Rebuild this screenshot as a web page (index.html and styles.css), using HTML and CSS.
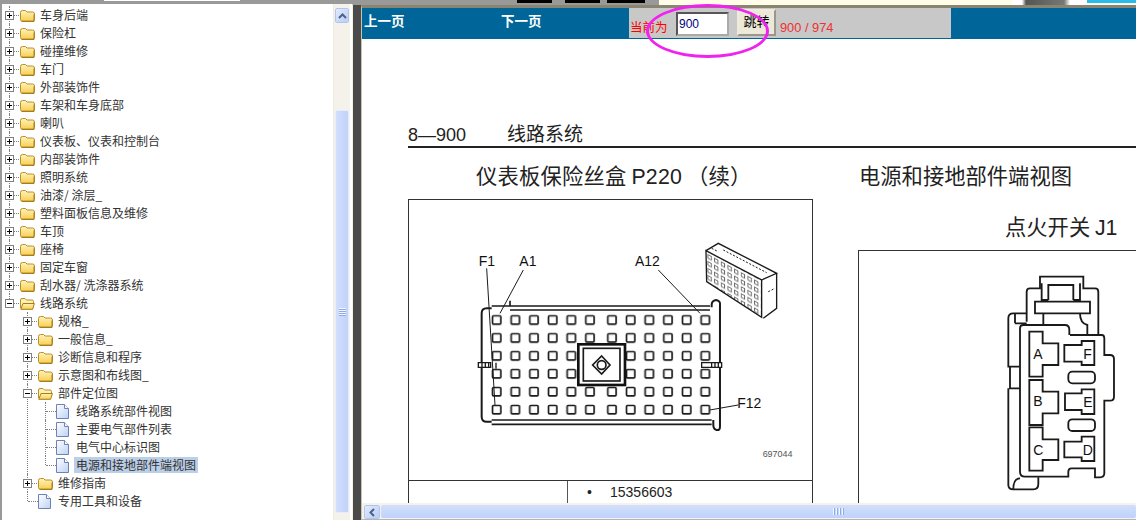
FILE: index.html
```html
<!DOCTYPE html>
<html lang="zh-CN">
<head>
    <meta charset="UTF-8">
    <title>线路系统</title>
    <link rel="stylesheet" href="styles.css">
</head>
<body>
    <svg class="defs" width="0" height="0">
        <defs>
            <linearGradient id="gFolder" x1="0" y1="0" x2="0" y2="1">
                <stop offset="0" stop-color="#fff3b8"/>
                <stop offset="1" stop-color="#f8cf55"/>
            </linearGradient>
            <linearGradient id="gDoc" x1="0" y1="0" x2="1" y2="1">
                <stop offset="0" stop-color="#ffffff"/>
                <stop offset="1" stop-color="#bcd2f4"/>
            </linearGradient>
            <symbol id="folder" viewBox="0 0 15 13">
                <path d="M.5 3.500q0-2 2-2h3l1.500 1.500h5.500q2 0 2 2v5.500q0 1.500-1.500 1.500h-11q-1.500 0-1.500-1.500z" fill="url(#gFolder)" stroke="#b88f2a"/>
                <path d="M1.500 12.500h12.500v-7" fill="none" stroke="#a87c18"/>
            </symbol>
            <symbol id="folderOpen" viewBox="0 0 15 13">
                <path d="M.5 11V3q0-1.500 1.500-1.500h3L6.500 3H12q1.500 0 1.500 1.500V6" fill="#fdf0b0" stroke="#b88f2a"/>
                <path d="M.8 12.300 3 6.500h11.400l-1.800 5.800z" fill="url(#gFolder)" stroke="#a87c18"/>
            </symbol>
            <symbol id="page" viewBox="0 0 13 15">
                <path d="M.5.5h8l4 4v10H.5z" fill="url(#gDoc)" stroke="#6f82b8"/>
                <path d="M8.500.5v4h4" fill="#fff" stroke="#6f82b8"/>
            </symbol>
        </defs>
    </svg>

    <div class="topstrip">
        <span class="strip-white"></span>
        <span class="strip-black"></span>
        <span class="strip-black"></span>
        <span class="strip-black last"></span>
        <span class="strip-cream"></span>
        <span class="strip-logo"></span>
        <span class="strip-cyan"></span>
    </div>

    <div class="main">
        <!-- tree on the left -->
        <div class="treepane">
            <ul class="tree">
                <li><div class="row"><i class="tg plus"></i><svg class="ic"><use href="#folder"/></svg><span>车身后端</span></div></li>
                <li><div class="row"><i class="tg plus"></i><svg class="ic"><use href="#folder"/></svg><span>保险杠</span></div></li>
                <li><div class="row"><i class="tg plus"></i><svg class="ic"><use href="#folder"/></svg><span>碰撞维修</span></div></li>
                <li><div class="row"><i class="tg plus"></i><svg class="ic"><use href="#folder"/></svg><span>车门</span></div></li>
                <li><div class="row"><i class="tg plus"></i><svg class="ic"><use href="#folder"/></svg><span>外部装饰件</span></div></li>
                <li><div class="row"><i class="tg plus"></i><svg class="ic"><use href="#folder"/></svg><span>车架和车身底部</span></div></li>
                <li><div class="row"><i class="tg plus"></i><svg class="ic"><use href="#folder"/></svg><span>喇叭</span></div></li>
                <li><div class="row"><i class="tg plus"></i><svg class="ic"><use href="#folder"/></svg><span>仪表板、仪表和控制台</span></div></li>
                <li><div class="row"><i class="tg plus"></i><svg class="ic"><use href="#folder"/></svg><span>内部装饰件</span></div></li>
                <li><div class="row"><i class="tg plus"></i><svg class="ic"><use href="#folder"/></svg><span>照明系统</span></div></li>
                <li><div class="row"><i class="tg plus"></i><svg class="ic"><use href="#folder"/></svg><span>油漆/ 涂层_</span></div></li>
                <li><div class="row"><i class="tg plus"></i><svg class="ic"><use href="#folder"/></svg><span>塑料面板信息及维修</span></div></li>
                <li><div class="row"><i class="tg plus"></i><svg class="ic"><use href="#folder"/></svg><span>车顶</span></div></li>
                <li><div class="row"><i class="tg plus"></i><svg class="ic"><use href="#folder"/></svg><span>座椅</span></div></li>
                <li><div class="row"><i class="tg plus"></i><svg class="ic"><use href="#folder"/></svg><span>固定车窗</span></div></li>
                <li><div class="row"><i class="tg plus"></i><svg class="ic"><use href="#folder"/></svg><span>刮水器/ 洗涤器系统</span></div></li>
                <li class="last">
                    <div class="row"><i class="tg minus"></i><svg class="ic"><use href="#folderOpen"/></svg><span>线路系统</span></div>
                    <ul>
                        <li><div class="row"><i class="tg plus"></i><svg class="ic"><use href="#folder"/></svg><span>规格_</span></div></li>
                        <li><div class="row"><i class="tg plus"></i><svg class="ic"><use href="#folder"/></svg><span>一般信息_</span></div></li>
                        <li><div class="row"><i class="tg plus"></i><svg class="ic"><use href="#folder"/></svg><span>诊断信息和程序</span></div></li>
                        <li><div class="row"><i class="tg plus"></i><svg class="ic"><use href="#folder"/></svg><span>示意图和布线图_</span></div></li>
                        <li>
                            <div class="row"><i class="tg minus"></i><svg class="ic"><use href="#folderOpen"/></svg><span>部件定位图</span></div>
                            <ul>
                                <li><div class="row leaf"><svg class="ic ic-page"><use href="#page"/></svg><span>线路系统部件视图</span></div></li>
                                <li><div class="row leaf"><svg class="ic ic-page"><use href="#page"/></svg><span>主要电气部件列表</span></div></li>
                                <li><div class="row leaf"><svg class="ic ic-page"><use href="#page"/></svg><span>电气中心标识图</span></div></li>
                                <li class="last"><div class="row leaf"><svg class="ic ic-page"><use href="#page"/></svg><span class="selected">电源和接地部件端视图</span></div></li>
                            </ul>
                        </li>
                        <li><div class="row"><i class="tg plus"></i><svg class="ic"><use href="#folder"/></svg><span>维修指南</span></div></li>
                        <li class="last"><div class="row leaf"><svg class="ic ic-page"><use href="#page"/></svg><span>专用工具和设备</span></div></li>
                    </ul>
                </li>
            </ul>
            <div class="vscroll">
                <div class="sbtn up"><svg width="9" height="6" viewBox="0 0 9 6"><path d="M1 5l3.500-3.500L8 5" fill="none" stroke="#4d6185" stroke-width="2"/></svg></div>
                <div class="vthumb"><i></i><i></i><i></i><i></i></div>
            </div>
        </div>

        <div class="splitter"></div>

        <!-- document on the right -->
        <div class="viewer">
            <div class="pagebar">
                <a class="pagelink">上一页</a>
                <a class="pagelink">下一页</a>
                <div class="jump">
                    <span class="jump-label">当前为</span>
                    <input class="jump-input" type="text" value="900">
                    <button class="jump-btn">跳转</button>
                    <span class="jump-count">900 / 974</span>
                </div>
                <div class="circle"></div>
            </div>

            <div class="doc">
                <div class="doc-head"><span class="doc-num">8—900</span><span>线路系统</span></div>
                <div class="doc-cols">
                    <div class="col-left">
                        <h2 class="doc-title center">仪表板保险丝盒 <span class="latin">P220</span> （续）</h2>
                        <div class="figbox">
                            <svg class="fig" width="403" height="280" viewBox="409 200 403 280">
                                <defs>
                                    <pattern id="holes" patternUnits="userSpaceOnUse" x="90" y="250" width="56" height="53.800">
                                        <rect x="7.500" y="7.500" width="25" height="25" rx="3" fill="#fff" stroke="#1a1a1a" stroke-width="5"/>
                                    </pattern>
                                    <pattern id="holesRight" href="#holes" x="436"/>
                                    <pattern id="miniholes" patternUnits="userSpaceOnUse" width="20" height="21" patternTransform="skewY(28.600)">
                                        <rect x="4" y="4" width="10" height="11" fill="#fff" stroke="#555" stroke-width="2.500"/>
                                    </pattern>
                                </defs>
                                <g transform="translate(460 230) scale(.3333)" fill="none" stroke="#1a1a1a" stroke-width="5">
                                    <rect x="90" y="250" width="336" height="323" fill="url(#holes)" stroke="none"/>
                                    <rect x="436" y="250" width="336" height="323" fill="url(#holesRight)" stroke="none"/>
                                    <path d="M95 228H150V212M150 228H750M150 240H750"/>
                                    <path d="M95 235H80Q65 235 65 250V560Q65 575 80 575H95" stroke-width="6"/>
                                    <path d="M95 570H755M95 583H755" stroke-width="5"/>
                                    <path d="M755 232V225Q755 212 768 210Q782 212 780 225V590Q780 602 770 600Q760 598 760 585V570" stroke-width="6"/>
                                    <path d="M55 398H92V412H55ZM66 398V412M76 398V412M86 398V412M108 398V416M725 398H785V412H725ZM755 398V412M765 398V412M775 398V412" fill="#fff" stroke-width="4"/>
                                    <rect x="355" y="343" width="140" height="122" fill="#fff" stroke="#111" stroke-width="8"/>
                                    <rect x="370" y="355" width="110" height="98" stroke-width="5"/>
                                    <path d="M425 378L450 405L425 432L398 405Z"/>
                                    <circle cx="425" cy="405" r="13"/>
                                    <path d="M80 115L105 525M190 120L120 250M595 120L720 250M835 525L750 540" stroke-width="3"/>
                                    <path d="M738 62L905 150V262L740 155Z" fill="url(#miniholes)" stroke-width="4"/>
                                    <path d="M738 62L775 40L950 130L905 150M950 130V235L910 265" stroke-width="4"/>
                                    <path d="M755 55L775 65M790 60L920 128M925 185L945 175" stroke-width="3" stroke-dasharray="6 5"/>
                                    <g class="fig-label">
                                        <text x="56" y="108">F1</text>
                                        <text x="178" y="108">A1</text>
                                        <text x="525" y="108">A12</text>
                                        <text x="832" y="535">F12</text>
                                    </g>
                                    <text class="fig-code" x="908" y="680">697044</text>
                                </g>
                            </svg>
                            <div class="figrow">
                                <div class="figcell first"></div>
                                <div class="figcell"><span class="dot">•</span>15356603</div>
                            </div>
                        </div>
                    </div>
                    <div class="col-right">
                        <h2 class="doc-title">电源和接地部件端视图</h2>
                        <h3 class="doc-sub">点火开关 <span class="latin">J1</span></h3>
                        <div class="figbox right">
                            <svg class="fig" width="300" height="260" viewBox="859 251 300 260">
                                <g transform="translate(970 260) scale(.3333)" fill="none" stroke="#1a1a1a" stroke-width="5.500">
                                    <path d="M170 185V95Q170 85 180 85H210V50H340V85H375Q385 85 385 95V225"/>
                                    <path d="M235 120V75H310V120M215 70V120H235M330 70V120H310M195 125H360V160H195Z"/>
                                    <path d="M220 160V195M330 160Q330 190 352 195V225"/>
                                    <path d="M300 225H395Q403 225 403 235V285H420Q432 285 432 297V410Q432 422 420 422H403V640Q403 652 390 652H375V625H305Q295 625 295 635V650H165Q150 650 150 635V205Q150 195 160 195H285Q298 195 298 210V225"/>
                                    <path d="M170 160H130Q115 160 115 175V320H148M120 320V385H150M115 385V675Q115 688 130 688H190Q205 688 205 672V652M135 190H170M135 160V190M130 688Q130 655 150 655"/>
                                    <path d="M178 215H218V250H265V315H218V350H178Z"/>
                                    <path d="M178 360H218V395H265V460H218V495H178Z"/>
                                    <path d="M178 502H218V538H265V600H218V632H178Z"/>
                                    <path d="M283 255H335V243H373V315H335V305H283Z"/>
                                    <path d="M285 400H335V388H373V462H335V450H285Z"/>
                                    <path d="M283 545H335V530H373V603H335V592H283Z"/>
                                    <rect x="295" y="335" width="80" height="35" rx="12"/>
                                    <rect x="295" y="478" width="80" height="35" rx="12"/>
                                    <g class="fig-label">
                                        <text x="190" y="297">A</text>
                                        <text x="340" y="298">F</text>
                                        <text x="190" y="439">B</text>
                                        <text x="340" y="441">E</text>
                                        <text x="190" y="585">C</text>
                                        <text x="338" y="585">D</text>
                                    </g>
                                </g>
                            </svg>
                        </div>
                    </div>
                </div>
            </div>

            <div class="hscroll">
                <div class="sbtn left"><svg width="6" height="9" viewBox="0 0 6 9"><path d="M5 1L1.500 4.500 5 8" fill="none" stroke="#4d6185" stroke-width="2"/></svg></div>
                <div class="hthumb"><i></i><i></i><i></i><i></i></div>
            </div>
        </div>
    </div>
</body>
</html>
```

FILE: styles.css
```css
* {
    box-sizing: border-box;
}
html, body {
    margin: 0;
    padding: 0;
}
body {
    width: 1136px;
    height: 520px;
    overflow: hidden;
    background-color: #999999;
    font-family: "Noto Sans CJK SC", "Liberation Sans", sans-serif;
    font-size: 12px;
    display: flex;
    flex-direction: column;
}
.defs {
    position: absolute;
}

/* top strip */
.topstrip {
    height: 4px;
    flex: none;
    display: flex;
    align-items: flex-start;
    padding-left: 104px;
}
.topstrip span {
    display: block;
    flex: none;
}
.strip-white {
    width: 136px;
    height: 1px;
    margin-right: 277px;
    background-color: #ffffff;
}
.strip-black {
    width: 35px;
    height: 3px;
    margin-right: 13px;
    background-color: #000000;
}
.strip-black.last {
    width: 38px;
    margin-left: -6px;
    margin-right: 14px;
}
.strip-cream {
    width: 353px;
    height: 5px;
    background-color: #fffde8;
}
.strip-logo {
    width: 75px;
    height: 5px;
    background: linear-gradient(90deg, #ffffff 10px, #555555 14px, #777777 52px, #ffffff 58px);
}
.strip-cyan {
    width: 51px;
    height: 5px;
    background: linear-gradient(#2bbbe8 3px, #ffffff 3px);
}

.main {
    flex: 1;
    display: flex;
    min-height: 0;
}

/* left tree */
.treepane {
    width: 350px;
    flex: none;
    display: flex;
    margin-left: 2px;
    background-color: #ffffff;
}
.tree {
    width: 331px;
    flex: none;
    padding: 2px 0 0 3px;
    overflow: hidden;
}
.tree, .tree ul {
    list-style: none;
    margin: 0;
}
.tree ul {
    padding: 0 0 0 18px;
}
.tree li {
    position: relative;
}
.tree li::before {
    content: "";
    position: absolute;
    left: 4px;
    top: 0;
    bottom: 0;
    border-left: 1px dotted #808080;
}
.tree li.last::before {
    bottom: auto;
    height: 9px;
}
.row {
    position: relative;
    height: 18px;
    display: flex;
    align-items: center;
    color: #333333;
    line-height: 16px;
    white-space: nowrap;
}
.row::before {
    content: "";
    position: absolute;
    left: 5px;
    top: 9px;
    width: 11px;
    border-top: 1px dotted #808080;
}
.row.leaf::before {
    width: 10px;
}
.tg {
    position: relative;
    z-index: 1;
    width: 9px;
    height: 9px;
    flex: none;
    border: 1px solid #808080;
    background-color: #ffffff;
}
.tg::before {
    content: "";
    position: absolute;
    left: 1px;
    top: 3px;
    width: 5px;
    height: 1px;
    background-color: #000000;
}
.tg.plus::after {
    content: "";
    position: absolute;
    left: 3px;
    top: 1px;
    width: 1px;
    height: 5px;
    background-color: #000000;
}
.ic {
    position: relative;
    width: 15px;
    height: 13px;
    flex: none;
    margin: 0 5px 0 6px;
}
.ic-page {
    width: 13px;
    height: 15px;
    margin: 0 7px 0 15px;
}
.selected {
    margin-left: -2px;
    padding: 0 2px;
    background-color: #bccfe8;
    line-height: 16px;
}

/* left scrollbar */
.vscroll {
    width: 17px;
    flex: none;
    padding: 4px 0 0 1px;
    background-color: #f4f2ea;
    border-left: 1px solid #f0ebdc;
    display: flex;
    flex-direction: column;
}
.sbtn {
    flex: none;
    display: flex;
    align-items: center;
    justify-content: center;
    background: linear-gradient(135deg, #e2ebfe, #b8cdf8);
    border: 1px solid #ffffff;
    border-radius: 2px;
    outline: 1px solid #b0c4ee;
    outline-offset: -1px;
}
.sbtn.up {
    width: 14px;
    height: 15px;
}
.vthumb {
    width: 14px;
    height: 403px;
    margin-top: 87px;
    display: flex;
    flex-direction: column;
    align-items: center;
    justify-content: center;
    gap: 1px;
    background: linear-gradient(90deg, #d2dffc, #bfd2fb);
    border: 1px solid #e4ecfe;
    border-radius: 2px;
}
.vthumb i {
    width: 7px;
    height: 1px;
    background-color: #f2f6ff;
    box-shadow: 0 1px 0 #8fabe6;
}
.splitter {
    width: 9px;
    flex: none;
    background-color: #4a4a4a;
    border-left: 1px solid #f4f0e4;
    border-top: 1px solid #999999;
}

/* right side */
.viewer {
    flex: 1;
    min-width: 0;
    display: flex;
    flex-direction: column;
    background-color: #ffffff;
    border-top: 3px solid #8a8570;
    border-left: 1px solid #c8c4b0;
    margin-top: 1px;
}
.pagebar {
    position: relative;
    height: 31px;
    flex: none;
    display: flex;
    background-color: #006699;
}
.pagelink {
    width: 137px;
    padding: 4px 0 0 2px;
    flex: none;
    color: #ffffff;
    font-size: 13.500px;
    font-weight: bold;
    line-height: 16px;
}
.jump {
    width: 322px;
    height: 30px;
    margin-left: -7px;
    padding-left: 1px;
    display: flex;
    background-color: #c8c8c8;
    color: #ff0000;
}
.jump-label {
    width: 46px;
    flex: none;
    padding-top: 11px;
    font-size: 12.500px;
    line-height: 16px;
}
.jump-input {
    width: 53px;
    height: 24px;
    flex: none;
    margin: 4px 8px 0 0;
    padding: 0 1px;
    border: 2px inset #aaaaaa;
    background-color: #ffffff;
    color: #000080;
    font-family: "Liberation Sans", sans-serif;
    font-size: 12px;
}
.jump-btn {
    width: 39px;
    height: 27px;
    flex: none;
    margin: 1px 4px 0 0;
    padding: 0 0 6px;
    border: 2px outset #eeeadc;
    background-color: #ece9d8;
    color: #000000;
    font-family: "Noto Sans CJK SC", sans-serif;
    font-size: 13px;
}
.jump-count {
    padding-top: 12px;
    font-family: "Liberation Sans", sans-serif;
    font-size: 12.800px;
    line-height: 15px;
    color: #f03030;
}
.circle {
    position: absolute;
    left: 284px;
    top: -4px;
    width: 123px;
    height: 54px;
    border: 3px solid #f022ee;
    border-radius: 50%;
}

/* document */
.doc {
    flex: 1;
    min-height: 0;
    overflow: hidden;
    padding: 83px 0 0 46px;
    color: #222222;
}
.doc-head {
    width: 729px;
    height: 26px;
    border-bottom: 2px solid #222222;
    font-size: 19px;
    line-height: 22px;
    white-space: nowrap;
}
.doc-num {
    display: inline-block;
    width: 99px;
    font-family: "Liberation Sans", sans-serif;
    font-size: 18px;
}
.doc-cols {
    display: flex;
    gap: 45px;
    width: 800px;
}
.col-left {
    width: 405px;
    flex: none;
}
.col-right {
    flex: 1;
}
.doc-title {
    margin: 16px 0 0;
    padding-left: 1px;
    font-size: 21.300px;
    font-weight: normal;
    line-height: 22px;
    white-space: nowrap;
}
.doc-title.center {
    padding-left: 68px;
    letter-spacing: .2px;
}
.latin {
    font-family: "Liberation Sans", sans-serif;
}
.doc-sub {
    margin: 28px 0 0 147px;
    font-size: 21.300px;
    font-weight: normal;
    line-height: 24px;
    white-space: nowrap;
}
.figbox {
    margin-top: 11px;
    border: 1px solid #333333;
    border-bottom: 0;
    background-color: #ffffff;
}
.figbox.right {
    margin-top: 10px;
    height: 260px;
}
.fig {
    display: block;
}
.figrow {
    display: flex;
    height: 24px;
    border-top: 1px solid #333333;
}
.figcell {
    flex: 1;
    font-family: "Liberation Sans", sans-serif;
    font-size: 14px;
    line-height: 22px;
    white-space: nowrap;
}
.figcell.first {
    width: 159px;
    flex: none;
    border-right: 1px solid #555555;
}
.dot {
    display: inline-block;
    width: 7px;
    margin: 0 16px 0 19px;
}
.fig-label text {
    font-family: "Liberation Sans", sans-serif;
    font-size: 42px;
    fill: #111111;
    stroke: none;
}
.fig-code {
    font-family: "Liberation Sans", sans-serif;
    font-size: 27px;
    fill: #555555;
    stroke: none;
}

/* bottom scrollbar */
.hscroll {
    height: 17px;
    flex: none;
    display: flex;
    padding: 2px 0 1px 2px;
    background-color: #f4f2ea;
    border-bottom: 1px solid #b5b5b5;
}
.sbtn.left {
    width: 16px;
    height: 14px;
}
.hthumb {
    flex: 1;
    margin-left: 1px;
    display: flex;
    align-items: center;
    gap: 1px;
    padding-left: 452px;
    background: linear-gradient(#d2dffc, #bfd2fb);
    border-radius: 2px;
}
.hthumb i {
    width: 1px;
    height: 7px;
    margin-right: 1px;
    background-color: #f2f6ff;
    box-shadow: 1px 0 0 #8fabe6;
}
```
